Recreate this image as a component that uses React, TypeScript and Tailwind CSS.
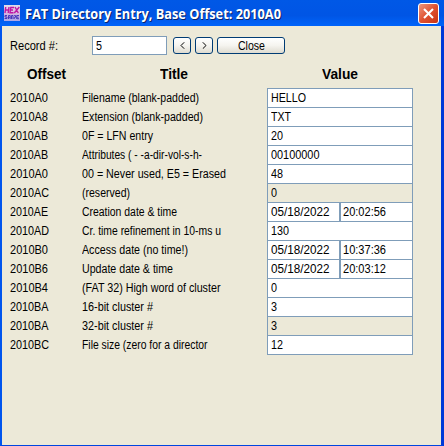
import { useLayoutEffect, useRef, useState } from "react";

// A single line of text stretched or squeezed to a given advance width.
function Label({ text, width, className = "" }: { text: string; width: number; className?: string }) {
  const ref = useRef<HTMLSpanElement>(null);
  const [scale, setScale] = useState(1);
  useLayoutEffect(() => {
    if (ref.current) {
      const natural = parseFloat(getComputedStyle(ref.current).width);
      if (natural > 0) setScale(width / natural);
    }
  }, [text, width]);
  return (
    <span className={`block shrink-0 ${className}`} style={{ width }}>
      <span ref={ref} className="inline-block origin-left whitespace-pre" style={{ transform: `scaleX(${scale})` }}>
        {text}
      </span>
    </span>
  );
}

type Cell = [text: string, width: number];
type Row = { offset: Cell; title: Cell; value: Cell; time?: string; disabled?: boolean };

const rows: Row[] = [
  { offset: ["2010A0", 38], title: ["Filename (blank-padded)", 117], value: ["HELLO", 35] },
  { offset: ["2010A8", 38], title: ["Extension (blank-padded)", 121], value: ["TXT", 20] },
  { offset: ["2010AB", 38], title: ["0F = LFN entry", 71], value: ["20", 12] },
  { offset: ["2010AB", 38], title: ["Attributes ( - -a-dir-vol-s-h-", 120], value: ["00100000", 48.5] },
  { offset: ["2010A0", 38], title: ["00 = Never used, E5 = Erased", 144], value: ["48", 12] },
  { offset: ["2010AC", 39], title: ["(reserved)", 48], value: ["0", 6], disabled: true },
  { offset: ["2010AE", 38], title: ["Creation date & time", 95], value: ["05/18/2022", 58.5], time: "20:02:56" },
  { offset: ["2010AD", 39], title: ["Cr. time refinement in 10-ms u", 139], value: ["130", 18] },
  { offset: ["2010B0", 38], title: ["Access date (no time!)", 106], value: ["05/18/2022", 58.5], time: "10:37:36" },
  { offset: ["2010B6", 38], title: ["Update date & time", 91], value: ["05/18/2022", 58.5], time: "20:03:12" },
  { offset: ["2010B4", 38], title: ["(FAT 32) High word of cluster", 138.5], value: ["0", 6] },
  { offset: ["2010BA", 38.5], title: ["16-bit cluster #", 71], value: ["3", 6] },
  { offset: ["2010BA", 38.5], title: ["32-bit cluster #", 71], value: ["3", 6], disabled: true },
  { offset: ["2010BC", 39], title: ["File size (zero for a director", 125.5], value: ["12", 12] },
];

function HexIcon() {
  return (
    <svg width="16" height="16" viewBox="0 0 16 16" className="shrink-0">
      <defs>
        <linearGradient id="hex" x1="0" y1="0" x2="0" y2="1">
          <stop offset="0" stopColor="#e0dcec" />
          <stop offset="0.5" stopColor="#d9b4df" />
          <stop offset="1" stopColor="#a9a6e8" />
        </linearGradient>
      </defs>
      <rect width="16" height="16" fill="url(#hex)" />
      <path d="M1.7 2L1 8M5 2L4.2 8M1.3 5H4.5M10 2.5H6.8L6 7.7H9.5M6.5 5H9M11 2L14.3 8M15.3 2L10.3 8" fill="none" stroke="#bd16a4" strokeWidth="1.4" />
      <path d="M3 10.5H1V12H3V13.5H0.6M4.5 14V10.5H6.2V14M4.5 12.3H6M7.5 14V10.5H9V14M10.2 10.5H11.5V12.3H10.2V14M12.7 14V10.5H15M13 12.2H14.6M13 13.7H15" fill="none" stroke="#4a37bb" strokeWidth="1" />
    </svg>
  );
}

const button =
  "flex h-[17px] items-center justify-center rounded-[3px] border border-[#003c74] bg-linear-to-b from-white via-[#f5f4ef] to-[#dedbd0]";

export default function App() {
  return (
    <div className="flex h-[446px] w-[444px] flex-col overflow-hidden bg-[#ece9d8] font-['Liberation_Sans',Arial,sans-serif] text-[12.5px] leading-[18px] text-black">
      <header className="flex h-[26px] shrink-0 items-center bg-linear-to-b from-[#0058e6] via-[#0055e5] via-60% to-[#0064fa] pr-[5px] pl-1">
        <HexIcon />
        <Label
          text="FAT Directory Entry, Base Offset: 2010A0"
          width={256}
          className="ml-[5px] pt-px font-['Open_Sans','Noto_Sans',sans-serif] text-[13.5px] font-bold text-white [text-shadow:1px_1px_0_#0a246a]"
        />
        <button aria-label="Close window" className="ml-auto flex size-[21px] items-center justify-center rounded-[3px] border border-white bg-linear-to-br from-[#ee957c] via-[#df5130] to-[#c93310]">
          <svg width="13" height="13" viewBox="0 0 13 13">
            <path d="M2 2L11 11M11 2L2 11" stroke="white" strokeWidth="2.1" />
          </svg>
        </button>
      </header>

      <main className="flex min-h-0 flex-1 flex-col border-r-[3px] border-b border-l-2 border-r-[#0038d8] border-b-[#0046e0] border-l-[#0055ee] shadow-[inset_0_0_0_0_#000]">
        <div className="flex items-center pt-[10px] pl-2">
          <Label text="Record #:" width={48} />
          <div className="ml-[34px] flex h-[19px] w-[75px] items-center border border-[#7f9db9] bg-white pl-[3px]">
            <Label text="5" width={6} />
          </div>
          <button className={`${button} ml-[6px] w-[18px]`}>
            <svg width="5" height="7" viewBox="0 0 5 7"><path d="M4.2 .3L1 3.5L4.2 6.7" fill="none" stroke="black" /></svg>
          </button>
          <button className={`${button} ml-1 w-[18px]`}>
            <svg width="5" height="7" viewBox="0 0 5 7"><path d="M.8 .3L4 3.5L.8 6.7" fill="none" stroke="black" /></svg>
          </button>
          <button className={`${button} ml-1 w-[68px]`}>
            <Label text="Close" width={27} className="text-left" />
          </button>
        </div>

        <div className="flex h-[33px] pt-[10px] pl-[25px] text-[14px] font-bold">
          <Label text="Offset" width={39} />
          <Label text="Title" width={28} className="ml-[94px]" />
          <Label text="Value" width={36} className="ml-[134px]" />
        </div>

        <div className="flex flex-col">
          {rows.map((row, i) => (
            <div key={i} className="flex h-[19px] items-start pl-2">
              <div className="w-[72px] pt-px">
                <Label text={row.offset[0]} width={row.offset[1]} />
              </div>
              <div className="w-[185px] pt-px">
                <Label text={row.title[0]} width={row.title[1]} />
              </div>
              <div className={`flex h-5 w-[146px] border border-[#7f9db9] ${row.disabled ? "bg-[#ece9d8]" : "bg-white"}`}>
                <div className={`pl-[3px] ${row.time ? "w-[73px] border-r-2 border-[#7f9db9]" : ""}`}>
                  <Label text={row.value[0]} width={row.value[1]} />
                </div>
                {row.time && (
                  <div className="pl-[2px]">
                    <Label text={row.time} width={43} />
                  </div>
                )}
              </div>
            </div>
          ))}
        </div>
      </main>
    </div>
  );
}
